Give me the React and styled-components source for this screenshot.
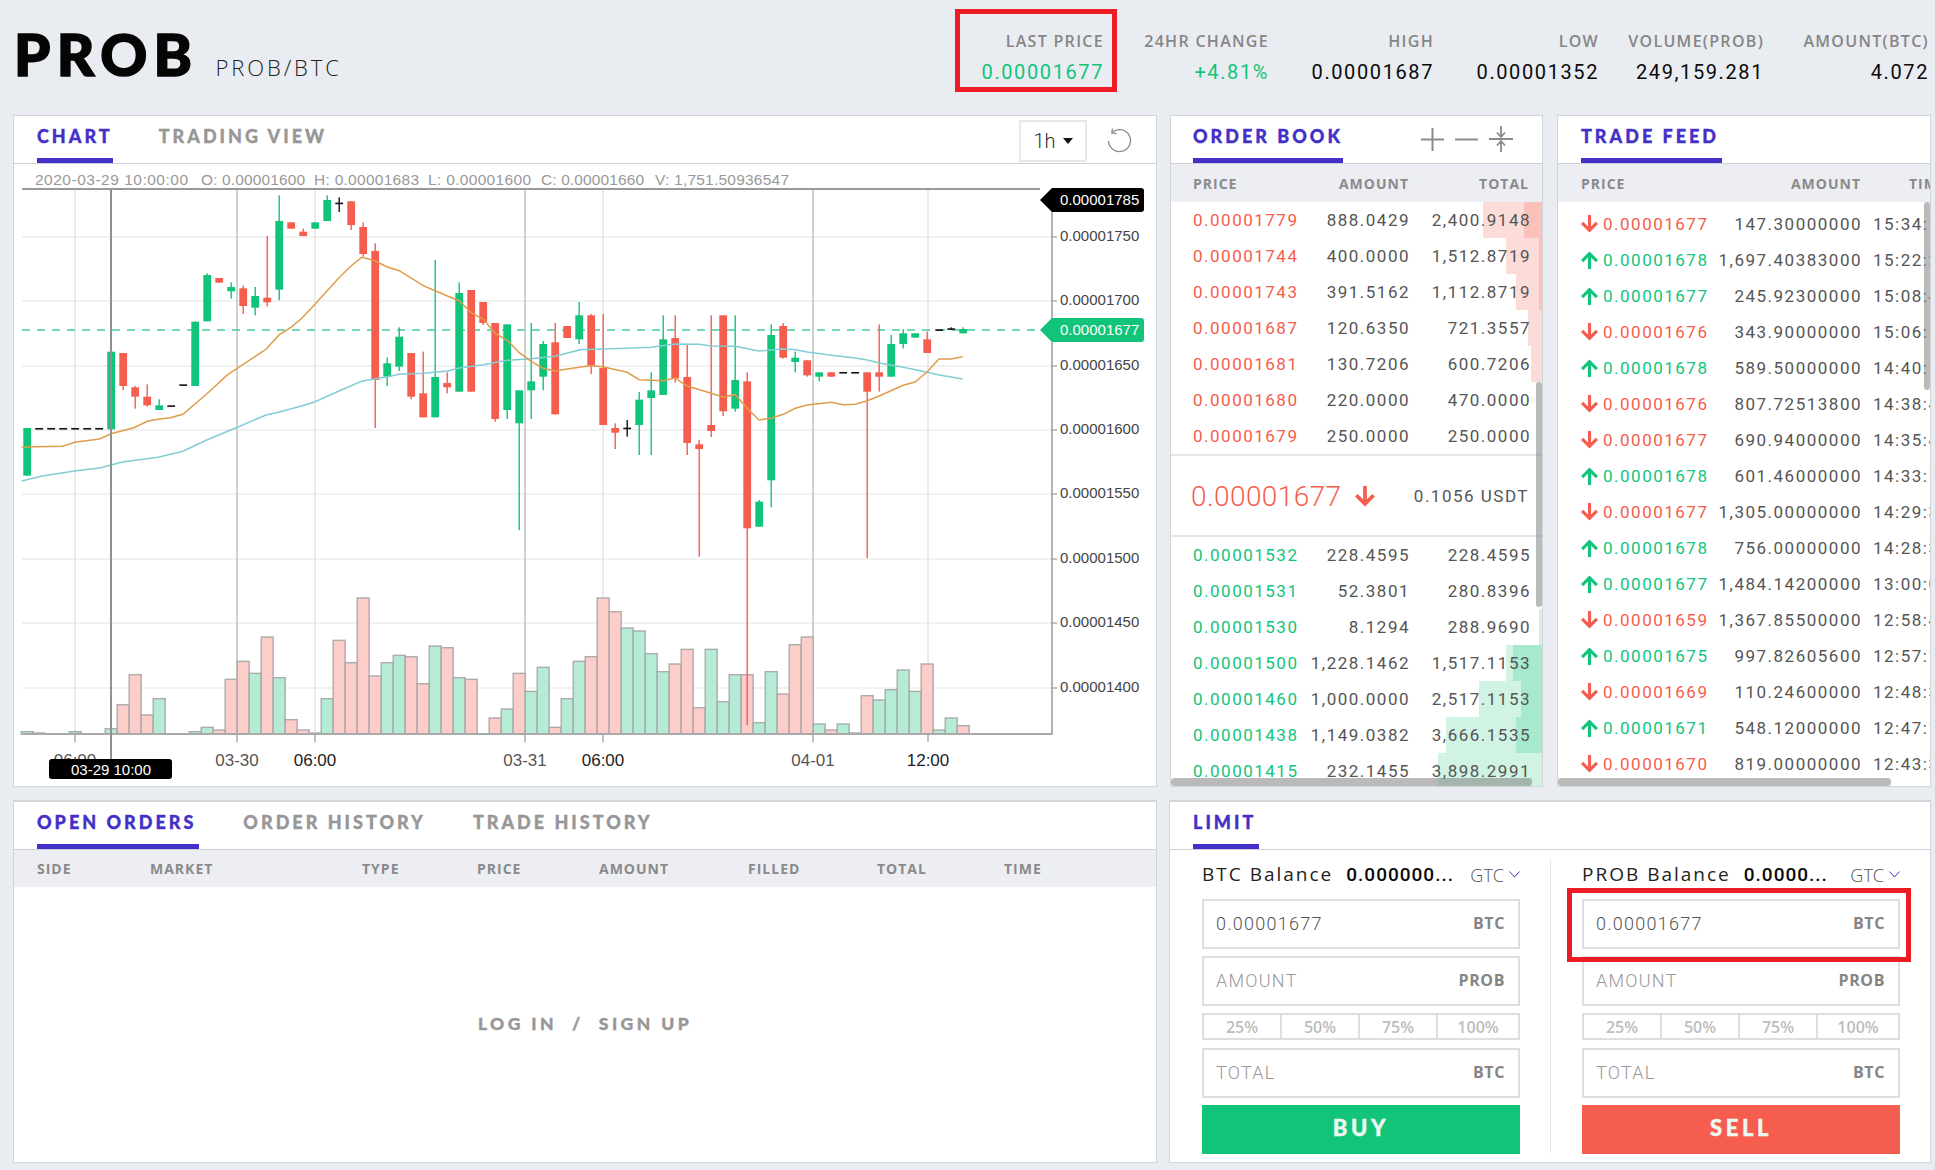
import React from 'react';
import styled, { createGlobalStyle } from 'styled-components';

const GREEN = '#12c47a';
const RED = '#f55d4e';
const PURPLE = '#4330c8';
const SANS = '"Open Sans", "Liberation Sans", sans-serif';
const NUM = 'Roboto, "Liberation Sans", sans-serif';
const HEAD = 'Lato, "Open Sans", sans-serif';
const CHART_FONT = '"Liberation Sans", Arial, sans-serif';

const GlobalStyle = createGlobalStyle`
    html, body { margin: 0; padding: 0; background: #e9ecf1; }
    * { box-sizing: border-box; }
`;

const Page = styled.div`
    position: relative;
    width: 1935px;
    height: 1170px;
    padding-left: 13px;
    overflow: hidden;
    background: #e9ecf1;
    font-family: ${SANS};
`;

const Header = styled.header`
    display: flex;
    justify-content: space-between;
    height: 115px;
    padding-right: 6px;
`;

const TitleGroup = styled.div`
    display: flex;
    align-items: baseline;
    padding: 19px 0 0 1px;
`;

const Logo = styled.h1`
    margin: 0;
    font: 900 58px/70px ${HEAD};
    letter-spacing: 6.4px;
    -webkit-text-stroke: 1.6px #050505;
    color: #050505;
`;

const Pair = styled.span`
    margin-left: 17px;
    font: 300 22px/1 ${SANS};
    letter-spacing: 2.9px;
    color: #222;
`;

const Stats = styled.div`
    display: grid;
    grid-template-columns: repeat(6, 165px);
    padding-top: 30px;
`;

const Stat = styled.div`
    text-align: right;
`;

const StatLabel = styled.div`
    font: 600 16px/22px ${SANS};
    letter-spacing: 1.3px;
    color: #868686;
`;

const StatValue = styled.div`
    margin-top: 8px;
    font: 400 20px/24px ${NUM};
    letter-spacing: 1.6px;
    color: ${p => p.$color || '#0a0a0a'};
`;

const Row = styled.div`
    display: flex;
    margin-bottom: 13px;
`;

const Panel = styled.section`
    display: flex;
    flex-direction: column;
    position: relative;
    width: ${p => p.$w}px;
    height: ${p => p.$h}px;
    margin-right: ${p => p.$gap || 0}px;
    background: #fff;
    border: 1px solid #d1d4d8;
    border-top-width: ${p => p.$top || 1}px;
    overflow: hidden;
`;

const TabBar = styled.div`
    display: flex;
    align-items: stretch;
    flex: none;
    height: 48px;
    padding-left: ${p => p.$pad || 23}px;
    border-bottom: 1px solid #ccd0d4;
`;

const Tab = styled.div`
    display: flex;
    align-items: center;
    padding-right: ${p => p.$trail || 0}px;
    padding-bottom: 2px;
    margin-right: ${p => p.$gap || 0}px;
    border-bottom: 5px solid ${p => (p.$active ? PURPLE : 'transparent')};
    font: 900 18px/1 ${HEAD};
    letter-spacing: 3px;
    -webkit-text-stroke: 0.35px currentColor;
    white-space: nowrap;
    color: ${p => (p.$active ? PURPLE : '#979797')};
`;

const TabTools = styled.div`
    display: flex;
    align-items: center;
    margin-left: auto;
`;

const IntervalSelect = styled.div`
    display: flex;
    align-items: center;
    justify-content: center;
    gap: 7px;
    width: 68px;
    height: 42px;
    margin: 3px 0 0;
    border: 2px solid #e8e8e8;
    font: 300 20px/1 ${NUM};
    color: #333;
`;

const Caret = styled.span`
    width: 0;
    height: 0;
    border-left: 5px solid transparent;
    border-right: 5px solid transparent;
    border-top: 6px solid #111;
`;

const ReloadWrap = styled.div`
    display: flex;
    margin: 0 24px 0 19px;
    color: #8c8c8c;
`;

const BookTools = styled.div`
    display: flex;
    align-items: center;
    gap: 11px;
    margin-left: auto;
    padding-right: 29px;
    padding-bottom: 1px;
    color: #8a8a8a;
`;

const ChartSvg = styled.svg`
    display: block;
    flex: none;
`;

const ColumnHead = styled.div`
    display: grid;
    grid-template-columns: ${p => p.$cols};
    flex: none;
    height: 38px;
    align-items: center;
    padding: ${p => p.$pad};
    padding-top: 2px;
    background: #eceef3;
    font: 700 14px/1 ${SANS};
    letter-spacing: 1px;
    white-space: nowrap;
    color: #8a8a8a;
`;

const HeadRight = styled.span`
    text-align: right;
`;

const HeadSplit = styled.span`
    display: flex;
    justify-content: space-between;
`;

const ListBody = styled.div`
    flex: 1;
    position: relative;
    overflow: hidden;
    padding-top: ${p => p.$top || 0}px;
`;

const BookRow = styled.div`
    display: grid;
    grid-template-columns: 96px 121px 121px;
    position: relative;
    height: 36px;
    align-items: center;
    padding-left: 22px;
    font: 400 17px/36px ${NUM};
    letter-spacing: 1.5px;
    white-space: nowrap;
    color: #555;
`;

const DepthBar = styled.div`
    position: absolute;
    top: 0;
    bottom: 0;
    right: 0;
    background: ${p => p.$color};
`;

const Cell = styled.span`
    position: relative;
    text-align: ${p => (p.$right ? 'right' : 'left')};
    color: ${p => p.$color || 'inherit'};
`;

const MidPrice = styled.div`
    display: flex;
    align-items: center;
    height: 83px;
    padding: 2px 13px 0 20px;
    border-top: 2px solid #e5e6e9;
    border-bottom: 2px solid #e5e6e9;
`;

const MidValue = styled.span`
    font: 300 28px/1 ${NUM};
    letter-spacing: 0.4px;
    color: ${RED};
`;

const MidArrow = styled.span`
    display: flex;
    margin-left: 14px;
    color: ${RED};
`;

const MidUsd = styled.span`
    margin-left: auto;
    font: 400 17px/1 ${NUM};
    letter-spacing: 1.5px;
    color: #555;
`;

const TradeRow = styled.div`
    display: grid;
    grid-template-columns: 22px 99px 160px max-content;
    height: 36px;
    align-items: center;
    padding-left: 23px;
    font: 400 17px/36px ${NUM};
    letter-spacing: 1.5px;
    white-space: nowrap;
    color: #555;
`;

const TradeArrow = styled.span`
    display: flex;
    color: ${p => p.$color};
`;

const TradeTime = styled.span`
    padding-left: 11px;
`;

const ScrollThumb = styled.div`
    position: absolute;
    background: rgba(130, 130, 130, 0.55);
    border-radius: 3px;
    ${p =>
        p.$vertical
            ? `right: 0; width: 6px; top: ${p.$from}px; height: ${p.$size}px;`
            : `bottom: 0; height: 8px; left: ${p.$from}px; width: ${p.$size}px;`}
`;

const OrdersHead = styled.div`
    display: flex;
    flex: none;
    height: 37px;
    align-items: center;
    padding-left: 23px;
    background: #eceef3;
    font: 700 14px/1 ${SANS};
    letter-spacing: 1px;
    color: #8a8a8a;
`;

const OrdersCol = styled.span`
    width: ${p => p.$w}px;
`;

const OrdersEmpty = styled.div`
    flex: 1;
    display: flex;
    align-items: center;
    justify-content: center;
    padding-bottom: 1px;
    font: 900 17.5px/1 ${HEAD};
    letter-spacing: 3.4px;
    -webkit-text-stroke: 0.35px currentColor;
    white-space: pre;
    color: #979797;
`;

const TradeForms = styled.div`
    display: grid;
    grid-template-columns: 318px 318px;
    column-gap: 62px;
    padding: 9px 0 0 32px;
    position: relative;
`;

const FormDivider = styled.div`
    position: absolute;
    left: 380px;
    top: 9px;
    height: 294px;
    width: 1px;
    background: #e6e6e6;
`;

const Form = styled.div`
    display: flex;
    flex-direction: column;
`;

const BalanceRow = styled.div`
    display: flex;
    align-items: center;
    height: 31px;
    margin-bottom: 9px;
    white-space: nowrap;
`;

const BalanceLabel = styled.span`
    font: 400 19px/1 ${SANS};
    letter-spacing: 2px;
    color: #222;
`;

const BalanceValue = styled.span`
    margin-left: 13px;
    font: 500 19px/1 ${NUM};
    letter-spacing: 1px;
    color: #0a0a0a;
`;

const GtcPicker = styled.span`
    display: flex;
    align-items: center;
    gap: 5px;
    margin-left: auto;
    font: 300 18px/1 ${SANS};
    color: #555;
`;

const Field = styled.div`
    display: flex;
    align-items: center;
    justify-content: space-between;
    height: 50px;
    margin-bottom: 7px;
    padding: 0 13px 0 12px;
    border: 2px solid #dedede;
    font: 300 18px/1 ${NUM};
    letter-spacing: 1.25px;
    color: ${p => (p.$filled ? '#555' : '#999')};
`;

const FieldUnit = styled.span`
    margin-top: -2px;
    font: 700 16px/1 ${SANS};
    letter-spacing: 0.6px;
    color: #858585;
`;

const PercentRow = styled.div`
    display: grid;
    grid-template-columns: 76px 78px 78px 1fr;
    height: 27px;
    margin-bottom: 8px;
    border: 2px solid #dedede;
`;

const PercentCell = styled.span`
    display: flex;
    align-items: center;
    justify-content: center;
    border-left: ${p => (p.$first ? 'none' : '2px solid #dedede')};
    font: 600 16px/1 ${SANS};
    color: #bdbdbd;
`;

const ActionButton = styled.div`
    display: flex;
    align-items: center;
    justify-content: center;
    height: 49px;
    padding-bottom: 4px;
    background: ${p => p.$color};
    font: 900 22px/1 ${HEAD};
    letter-spacing: 3.6px;
    -webkit-text-stroke: 0.4px #eef8f3;
    color: #eef8f3;
`;

const Highlight = styled.div`
    position: absolute;
    left: ${p => p.$x}px;
    top: ${p => p.$y}px;
    width: ${p => p.$w}px;
    height: ${p => p.$h}px;
    border: 5px solid #ed1c24;
    pointer-events: none;
`;

// candles: [i, bodyTop, bodyBottom, wickTop, wickBottom, color] in crop units
const candles = [
    [0, 774, 917, 774, 917, 'g'], [7, 545, 778, 545, 778, 'g'], [8, 549, 648, 549, 660, 'r'],
    [9, 652, 680, 648, 716, 'r'], [10, 680, 706, 643, 710, 'r'], [11, 706, 720, 688, 720, 'g'],
    [14, 455, 648, 455, 648, 'g'], [15, 315, 454, 310, 454, 'g'], [16, 324, 338, 324, 338, 'r'],
    [17, 351, 364, 337, 386, 'g'], [18, 355, 408, 347, 432, 'r'], [19, 378, 413, 351, 436, 'g'],
    [20, 383, 397, 198, 409, 'r'], [21, 153, 359, 76, 391, 'g'], [22, 157, 176, 157, 176, 'r'],
    [23, 185, 198, 176, 198, 'r'], [24, 157, 176, 157, 176, 'g'], [25, 90, 153, 76, 153, 'g'],
    [27, 94, 165, 94, 180, 'r'], [28, 171, 252, 157, 260, 'r'], [29, 243, 630, 220, 774, 'r'],
    [30, 580, 620, 562, 648, 'g'], [31, 500, 590, 472, 603, 'g'], [32, 549, 680, 549, 688, 'r'],
    [33, 670, 742, 545, 742, 'r'], [34, 621, 742, 270, 742, 'g'], [35, 639, 652, 607, 670, 'r'],
    [36, 369, 665, 337, 665, 'g'], [37, 360, 665, 360, 665, 'r'], [38, 396, 459, 396, 465, 'r'],
    [39, 459, 747, 459, 755, 'r'], [40, 463, 720, 463, 747, 'g'], [41, 661, 760, 661, 1080, 'g'],
    [42, 634, 661, 459, 747, 'g'], [43, 522, 620, 513, 661, 'g'], [44, 517, 733, 459, 733, 'r'],
    [45, 468, 504, 468, 504, 'r'], [46, 436, 508, 396, 522, 'g'], [47, 436, 587, 432, 612, 'r'],
    [48, 594, 765, 432, 765, 'r'], [49, 774, 788, 760, 837, 'r'], [51, 689, 765, 666, 855, 'g'],
    [52, 661, 684, 607, 855, 'g'], [53, 508, 675, 436, 675, 'g'], [54, 504, 625, 436, 638, 'r'],
    [55, 621, 819, 525, 855, 'r'], [56, 823, 837, 810, 1160, 'r'], [57, 765, 783, 436, 801, 'r'],
    [58, 436, 724, 436, 738, 'r'], [59, 630, 716, 436, 725, 'g'], [60, 634, 1075, 607, 1665, 'r'],
    [61, 995, 1070, 990, 1070, 'g'], [62, 495, 931, 463, 1012, 'g'], [63, 468, 563, 459, 566, 'r'],
    [64, 563, 576, 545, 607, 'g'], [65, 571, 616, 571, 620, 'r'], [66, 607, 620, 607, 634, 'g'],
    [67, 607, 620, 607, 620, 'r'], [70, 607, 665, 607, 1165, 'r'], [71, 607, 620, 463, 665, 'r'],
    [72, 522, 620, 495, 620, 'g'], [73, 490, 522, 477, 535, 'g'], [74, 490, 503, 490, 503, 'g'],
    [75, 508, 549, 485, 549, 'r'], [78, 477, 490, 472, 490, 'g']
];

// flat candles drawn in black: [i, y, wickTop, wickBottom]
const dojis = [
    [1, 776], [2, 776], [3, 776], [4, 776], [5, 776], [6, 776], [12, 708], [13, 645],
    [26, 100, 82, 126], [50, 775, 750, 800], [68, 608], [69, 608], [76, 480], [77, 477, 472, 480]
];

const volumes = [
    [0, 695, 'g'], [1, 699, 'g'], [4, 695, 'g'], [7, 686, 'g'], [8, 614, 'r'], [9, 524, 'r'], [10, 645, 'r'],
    [11, 596, 'g'], [14, 695, 'g'], [15, 682, 'g'], [16, 690, 'r'], [17, 538, 'r'], [18, 484, 'r'], [19, 520, 'g'],
    [20, 411, 'r'], [21, 533, 'g'], [22, 659, 'r'], [23, 690, 'r'], [24, 699, 'g'], [25, 596, 'g'], [26, 421, 'r'],
    [27, 488, 'r'], [28, 294, 'r'], [29, 528, 'r'], [30, 488, 'g'], [31, 466, 'g'], [32, 470, 'r'], [33, 551, 'r'],
    [34, 438, 'g'], [35, 443, 'r'], [36, 533, 'g'], [37, 538, 'r'], [39, 654, 'r'], [40, 627, 'g'], [41, 520, 'r'],
    [42, 574, 'g'], [43, 502, 'g'], [44, 682, 'r'], [45, 596, 'g'], [46, 484, 'g'], [47, 470, 'r'], [48, 294, 'r'],
    [49, 335, 'r'], [50, 384, 'g'], [51, 393, 'g'], [52, 461, 'g'], [53, 515, 'g'], [54, 492, 'r'], [55, 448, 'r'],
    [56, 623, 'r'], [57, 448, 'g'], [58, 605, 'g'], [59, 524, 'g'], [60, 524, 'r'], [61, 668, 'g'], [62, 515, 'g'],
    [63, 582, 'r'], [64, 434, 'r'], [65, 411, 'r'], [66, 672, 'g'], [67, 690, 'r'], [68, 672, 'g'], [69, 699, 'g'],
    [70, 587, 'r'], [71, 600, 'g'], [72, 569, 'g'], [73, 510, 'g'], [74, 574, 'g'], [75, 492, 'r'], [76, 690, 'g'],
    [77, 654, 'g'], [78, 677, 'r']
];

const orangeA = [[57, 831], [163, 829], [195, 817], [260, 807], [290, 791], [350, 773], [385, 754], [413, 748], [445, 743], [478, 733], [540, 672], [595, 614], [695, 538], [730, 494], [760, 472], [790, 443], [823, 403], [855, 362], [887, 322], [918, 287], [945, 262], [975, 270], [1012, 291], [1043, 302], [1106, 347], [1137, 362], [1169, 378], [1200, 392], [1231, 428], [1263, 448], [1294, 490], [1325, 510], [1357, 548], [1388, 574], [1419, 595], [1450, 603], [1482, 597], [1514, 592]];
const orangeB = [[50, 592], [81, 587], [112, 590], [175, 607], [207, 629], [270, 632], [301, 624], [332, 648], [395, 670], [427, 682], [458, 674], [489, 715], [520, 750], [552, 745], [583, 733], [615, 715], [646, 705], [709, 697], [740, 704], [771, 703], [803, 692], [834, 678], [897, 646], [928, 636], [960, 605], [990, 567], [1022, 567], [1052, 560]];
const cyanA = [[57, 933], [110, 918], [195, 903], [260, 894], [320, 876], [413, 862], [478, 844], [540, 810], [620, 772], [695, 735], [730, 726], [790, 707], [823, 695], [887, 662], [945, 634], [1012, 620], [1043, 613], [1106, 610], [1169, 603], [1200, 594], [1263, 584], [1325, 571], [1388, 566], [1450, 559], [1514, 540]];
const cyanB = [[50, 539], [112, 537], [175, 535], [238, 532], [301, 522], [364, 523], [395, 528], [458, 529], [520, 543], [583, 537], [615, 539], [646, 546], [709, 556], [771, 564], [803, 570], [834, 579], [897, 592], [960, 607], [991, 615], [1052, 627]];

const cx = i => 27.2 + i * 12;
const cy = v => 170 + v / 3;
const vy = v => 500 + v / 3;
const linePoints = (a, b) =>
    [...a.map(([x, y]) => [x / 2.613, cy(y)]), ...b.map(([x, y]) => [560 + x / 2.613, cy(y)])]
        .map(([x, y]) => `${x.toFixed(1)},${y.toFixed(1)}`)
        .join(' ');

const priceGrid = [
    [237, '0.00001750'], [301, '0.00001700'], [366, '0.00001650'], [430, '0.00001600'],
    [494, '0.00001550'], [559, '0.00001500'], [623, '0.00001450'], [688, '0.00001400']
];

// legend items: [x, text, width]
const legend = [
    [35, '2020-03-29 10:00:00', 153], [201, 'O: 0.00001600', 104], [314, 'H: 0.00001683', 105],
    [428, 'L: 0.00001600', 103], [541, 'C: 0.00001660', 103], [655, 'V: 1,751.50936547', 134]
];

const timeLabels = [
    [75, '06:00', '#555'], [237, '03-30', '#555'], [315, '06:00', '#222'], [525, '03-31', '#555'],
    [603, '06:00', '#222'], [813, '04-01', '#555'], [928, '12:00', '#222']
];

const PriceChart = () => (
    <ChartSvg width="1142" height="622" viewBox="14 164 1142 622">
        {legend.map(([x, t, w]) => (
            <text key={x} x={x} y="185" fontFamily={CHART_FONT} fontSize="15.5" textLength={w} fill="#999">
                {t}
            </text>
        ))}

        {priceGrid.map(([y]) => (
            <line key={y} x1="22" x2="1052" y1={y} y2={y} stroke="#ececec" strokeWidth="1.5" />
        ))}
        {[75, 315, 603, 928].map(x => (
            <line key={x} x1={x} x2={x} y1="189" y2="734" stroke="#e4e4e4" strokeWidth="1.5" />
        ))}
        {[237, 525, 813].map(x => (
            <line key={x} x1={x} x2={x} y1="189" y2="734" stroke="#c0c0c0" strokeWidth="1.5" />
        ))}

        {volumes.map(([i, top, c]) => (
            <rect
                key={i}
                x={cx(i) - 6}
                y={vy(top)}
                width="12"
                height={734 - vy(top)}
                fill={c === 'g' ? '#b6ebd5' : '#fccdc9'}
                stroke="#a5a5a5"
                strokeOpacity="0.9"
                strokeWidth="1.4"
            />
        ))}

        <line x1="22" x2="1040" y1="330" y2="330" stroke="#45d09c" strokeWidth="1.4" strokeDasharray="8 7" />

        {candles.map(([i, t, b, wt, wb, c]) => (
            <g key={i} fill={c === 'g' ? GREEN : RED}>
                <rect x={cx(i) - 0.7} y={cy(wt)} width="1.4" height={cy(wb) - cy(wt)} />
                <rect x={cx(i) - 3.9} y={cy(t)} width="7.8" height={cy(b) - cy(t)} />
            </g>
        ))}
        {dojis.map(([i, y, wt, wb]) => (
            <g key={i} fill="#111">
                <rect x={cx(i) - 3.9} y={cy(y) - 0.7} width="7.8" height="1.6" />
                {wt && <rect x={cx(i) - 0.7} y={cy(wt)} width="1.4" height={cy(wb) - cy(wt)} />}
            </g>
        ))}

        <polyline points={linePoints(cyanA, cyanB)} fill="none" stroke="#82cdd6" strokeWidth="1.5" />
        <polyline points={linePoints(orangeA, orangeB)} fill="none" stroke="#e09c4d" strokeWidth="1.5" />

        <line x1="22" x2="1040" y1="189" y2="189" stroke="#999" strokeWidth="2" />
        <line x1="1052" x2="1052" y1="200" y2="735" stroke="#999" strokeWidth="1.5" />
        <line x1="22" x2="1052" y1="734" y2="734" stroke="#aaa" strokeWidth="2" />
        {priceGrid.map(([y, t]) => (
            <g key={t}>
                <line x1="1052" x2="1057" y1={y} y2={y} stroke="#999" strokeWidth="1.2" />
                <text x="1060" y={y + 4} fontFamily={CHART_FONT} fontSize="15" fill="#444">
                    {t}
                </text>
            </g>
        ))}

        {timeLabels.map(([x, t, fill]) => (
            <g key={x}>
                <line x1={x} x2={x} y1="734" y2="742" stroke="#999" strokeWidth="1.2" />
                <text x={x} y="766" textAnchor="middle" fontFamily={CHART_FONT} fontSize="17" fill={fill}>
                    {t}
                </text>
            </g>
        ))}

        <line x1="111" x2="111" y1="189" y2="760" stroke="#909090" strokeWidth="2" />
        <rect x="49" y="759" width="123" height="20" rx="3" fill="#000" />
        <text x="111" y="775" textAnchor="middle" fontFamily={CHART_FONT} fontSize="15" fill="#fff">
            03-29 10:00
        </text>

        <path d="M1040 200 L1052 188 H1141 Q1144 188 1144 191 V209 Q1144 212 1141 212 H1052 Z" fill="#000" />
        <text x="1060" y="205" fontFamily={CHART_FONT} fontSize="15" fill="#fff">
            0.00001785
        </text>
        <path d="M1040 330 L1052 318 H1141 Q1144 318 1144 321 V339 Q1144 342 1141 342 H1052 Z" fill={GREEN} />
        <text x="1060" y="335" fontFamily={CHART_FONT} fontSize="15" fill="#fff">
            0.00001677
        </text>
    </ChartSvg>
);

const ArrowIcon = ({ up, h = 18, w = 17 }) => (
    <svg width={w} height={h} viewBox="0 0 16 17" fill="none" stroke="currentColor" strokeWidth="3">
        {up ? (
            <>
                <path d="M8 17V2" />
                <path d="M1 9.5L8 2.5l7 7" />
            </>
        ) : (
            <>
                <path d="M8 0v15" />
                <path d="M1 7.5l7 7 7-7" />
            </>
        )}
    </svg>
);

const ReloadIcon = () => (
    <svg width="26" height="26" viewBox="0 0 26 26" fill="none" stroke="currentColor" strokeWidth="1.3">
        <path d="M6 5.5A11 11 0 1 1 2.5 14" />
        <path d="M6.5 1.5L5.8 6l4.8 0.7" />
    </svg>
);

const PlusIcon = () => (
    <svg width="23" height="23" viewBox="0 0 23 23" stroke="currentColor" strokeWidth="2">
        <path d="M11.5 0v23M0 11.5h23" />
    </svg>
);

const MinusIcon = () => (
    <svg width="23" height="23" viewBox="0 0 23 23" stroke="currentColor" strokeWidth="2">
        <path d="M0 11.5h23" />
    </svg>
);

const CompactIcon = () => (
    <svg width="24" height="26" viewBox="0 0 24 26" fill="none" stroke="currentColor" strokeWidth="1.8">
        <path d="M0 13h24M12 0v10M12 16v10M8 6.5l4 4.5 4-4.5M8 19.5l4-4.5 4 4.5" />
    </svg>
);

const ChevronIcon = () => (
    <svg width="11" height="7" viewBox="0 0 11 7" fill="none" stroke={PURPLE} strokeWidth="1">
        <path d="M0.5 0.5L5.5 6l5-5.5" />
    </svg>
);

const stats = [
    ['LAST PRICE', '0.00001677', GREEN],
    ['24HR CHANGE', '+4.81%', GREEN],
    ['HIGH', '0.00001687'],
    ['LOW', '0.00001352'],
    ['VOLUME(PROB)', '249,159.281'],
    ['AMOUNT(BTC)', '4.072']
];

const asks = [
    ['0.00001779', '888.0429', '2,400.9148', 59, 18],
    ['0.00001744', '400.0000', '1,512.8719', 36, 3],
    ['0.00001743', '391.5162', '1,112.8719', 26, 3],
    ['0.00001687', '120.6350', '721.3557', 14, 0],
    ['0.00001681', '130.7206', '600.7206', 11, 0],
    ['0.00001680', '220.0000', '470.0000', 0, 0],
    ['0.00001679', '250.0000', '250.0000', 0, 0]
];

const bids = [
    ['0.00001532', '228.4595', '228.4595', 0, 0],
    ['0.00001531', '52.3801', '280.8396', 0, 0],
    ['0.00001530', '8.1294', '288.9690', 3, 0],
    ['0.00001500', '1,228.1462', '1,517.1153', 36, 29],
    ['0.00001460', '1,000.0000', '2,517.1153', 63, 21],
    ['0.00001438', '1,149.0382', '3,666.1535', 96, 26],
    ['0.00001415', '232.1455', '3,898.2991', 104, 0]
];

const trades = [
    [0, '0.00001677', '147.30000000', '15:34:10'],
    [1, '0.00001678', '1,697.40383000', '15:22:24'],
    [1, '0.00001677', '245.92300000', '15:08:41'],
    [0, '0.00001676', '343.90000000', '15:06:17'],
    [1, '0.00001678', '589.50000000', '14:40:12'],
    [0, '0.00001676', '807.72513800', '14:38:44'],
    [0, '0.00001677', '690.94000000', '14:35:40'],
    [1, '0.00001678', '601.46000000', '14:33:15'],
    [0, '0.00001677', '1,305.00000000', '14:29:33'],
    [1, '0.00001678', '756.00000000', '14:28:30'],
    [1, '0.00001677', '1,484.14200000', '13:00:05'],
    [0, '0.00001659', '1,367.85500000', '12:58:41'],
    [1, '0.00001675', '997.82605600', '12:57:13'],
    [0, '0.00001669', '110.24600000', '12:48:31'],
    [1, '0.00001671', '548.12000000', '12:47:19'],
    [0, '0.00001670', '819.00000000', '12:43:36']
];

const orderCols = [
    ['SIDE', 113], ['MARKET', 212], ['TYPE', 115], ['PRICE', 122],
    ['AMOUNT', 149], ['FILLED', 129], ['TOTAL', 127], ['TIME', 60]
];

const BookLine = ({ row, color, light, dark }) => (
    <BookRow>
        {row[3] > 0 && <DepthBar $color={light} style={{ width: row[3] }} />}
        {row[4] > 0 && <DepthBar $color={dark} style={{ width: row[4] }} />}
        <Cell $color={color}>{row[0]}</Cell>
        <Cell $right>{row[1]}</Cell>
        <Cell $right>{row[2]}</Cell>
    </BookRow>
);

const OrderForm = ({ base, balance, action, color }) => (
    <Form>
        <BalanceRow>
            <BalanceLabel>{base} Balance</BalanceLabel>
            <BalanceValue>{balance}</BalanceValue>
            <GtcPicker>
                GTC <ChevronIcon />
            </GtcPicker>
        </BalanceRow>
        <Field $filled>
            0.00001677 <FieldUnit>BTC</FieldUnit>
        </Field>
        <Field>
            AMOUNT <FieldUnit>PROB</FieldUnit>
        </Field>
        <PercentRow>
            {['25%', '50%', '75%', '100%'].map((p, i) => (
                <PercentCell key={p} $first={i === 0}>
                    {p}
                </PercentCell>
            ))}
        </PercentRow>
        <Field>
            TOTAL <FieldUnit>BTC</FieldUnit>
        </Field>
        <ActionButton $color={color}>{action}</ActionButton>
    </Form>
);

const App = () => (
    <Page>
        <GlobalStyle />
        <Header>
            <TitleGroup>
                <Logo>PROB</Logo>
                <Pair>PROB/BTC</Pair>
            </TitleGroup>
            <Stats>
                {stats.map(([label, value, color]) => (
                    <Stat key={label}>
                        <StatLabel>{label}</StatLabel>
                        <StatValue $color={color}>{value}</StatValue>
                    </Stat>
                ))}
            </Stats>
        </Header>

        <Row>
            <Panel $w={1144} $h={672} $gap={13}>
                <TabBar>
                    <Tab $active $gap={46}>CHART</Tab>
                    <Tab>TRADING VIEW</Tab>
                    <TabTools>
                        <IntervalSelect>
                            1h <Caret />
                        </IntervalSelect>
                        <ReloadWrap>
                            <ReloadIcon />
                        </ReloadWrap>
                    </TabTools>
                </TabBar>
                <PriceChart />
            </Panel>

            <Panel $w={373} $h={672} $gap={14}>
                <TabBar $pad={22}>
                    <Tab $active>ORDER BOOK</Tab>
                    <BookTools>
                        <PlusIcon />
                        <MinusIcon />
                        <CompactIcon />
                    </BookTools>
                </TabBar>
                <ColumnHead $cols="96px 120px 120px" $pad="0 13px 0 22px">
                    <span>PRICE</span>
                    <HeadRight>AMOUNT</HeadRight>
                    <HeadRight>TOTAL</HeadRight>
                </ColumnHead>
                <ListBody>
                    {asks.map(row => (
                        <BookLine key={row[0]} row={row} color={RED} light="#fcdcd9" dark="#fbc0ba" />
                    ))}
                    <MidPrice>
                        <MidValue>0.00001677</MidValue>
                        <MidArrow>
                            <ArrowIcon h={21} w={20} />
                        </MidArrow>
                        <MidUsd>0.1056 USDT</MidUsd>
                    </MidPrice>
                    {bids.map(row => (
                        <BookLine key={row[0]} row={row} color={GREEN} light="#d0f3e4" dark="#a6e9cc" />
                    ))}
                    <ScrollThumb $vertical $from={180} $size={225} />
                    <ScrollThumb $from={0} $size={361} />
                </ListBody>
            </Panel>

            <Panel $w={374} $h={672}>
                <TabBar>
                    <Tab $active $trail={3}>TRADE FEED</Tab>
                </TabBar>
                <ColumnHead $cols="280px 48px max-content" $pad="0 0 0 23px">
                    <HeadSplit>
                        <span>PRICE</span>
                        <span>AMOUNT</span>
                    </HeadSplit>
                    <span />
                    <span>TIME</span>
                </ColumnHead>
                <ListBody $top={4}>
                    {trades.map(([up, price, amount, time], i) => (
                        <TradeRow key={i}>
                            <TradeArrow $color={up ? GREEN : RED}>
                                <ArrowIcon up={!!up} />
                            </TradeArrow>
                            <Cell $color={up ? GREEN : RED}>{price}</Cell>
                            <Cell $right>{amount}</Cell>
                            <TradeTime>{time}</TradeTime>
                        </TradeRow>
                    ))}
                    <ScrollThumb $vertical $from={0} $size={188} />
                    <ScrollThumb $from={0} $size={333} />
                </ListBody>
            </Panel>
        </Row>

        <Row>
            <Panel $w={1144} $h={363} $gap={12} $top={2}>
                <TabBar>
                    <Tab $active $trail={3} $gap={44}>OPEN ORDERS</Tab>
                    <Tab $trail={3} $gap={44}>ORDER HISTORY</Tab>
                    <Tab $trail={3}>TRADE HISTORY</Tab>
                </TabBar>
                <OrdersHead>
                    {orderCols.map(([name, w]) => (
                        <OrdersCol key={name} $w={w}>{name}</OrdersCol>
                    ))}
                </OrdersHead>
                <OrdersEmpty>{'LOG IN  /  SIGN UP'}</OrdersEmpty>
            </Panel>

            <Panel $w={762} $h={363} $top={2}>
                <TabBar>
                    <Tab $active $trail={3}>LIMIT</Tab>
                </TabBar>
                <TradeForms>
                    <FormDivider />
                    <OrderForm base="BTC" balance="0.000000..." action="BUY" color={GREEN} />
                    <OrderForm base="PROB" balance="0.0000..." action="SELL" color={RED} />
                </TradeForms>
            </Panel>
        </Row>

        <Highlight $x={955} $y={9} $w={162} $h={83} />
        <Highlight $x={1567} $y={888} $w={344} $h={74} />
    </Page>
);

export default App;
